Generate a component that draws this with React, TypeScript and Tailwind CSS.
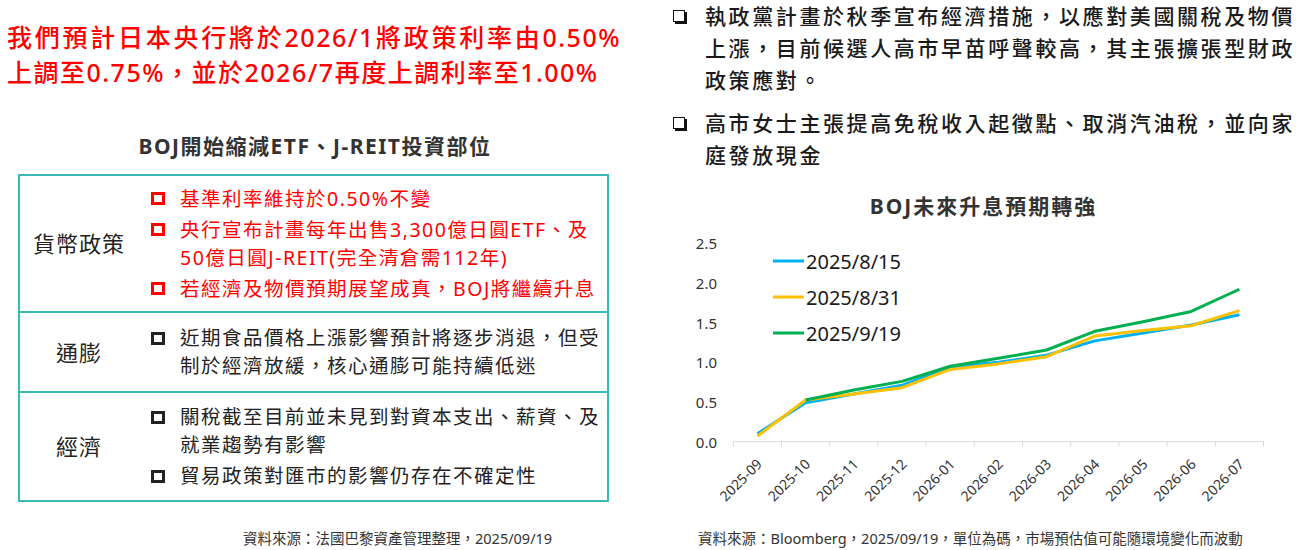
import React from "react";

const font = { fontFamily: '"Noto Sans", "Noto Sans CJK TC", sans-serif' };

const months = ["2025-09", "2025-10", "2025-11", "2025-12", "2026-01", "2026-02", "2026-03", "2026-04", "2026-05", "2026-06", "2026-07"];

const series: { label: string; color: string; values: (number | null)[] }[] = [
  { label: "2025/8/15", color: "#00b0f0", values: [0.1, 0.49, 0.6, 0.71, 0.94, 1.0, 1.09, 1.27, 1.37, 1.47, 1.6] },
  { label: "2025/8/31", color: "#ffc000", values: [0.07, 0.525, 0.6, 0.68, 0.91, 0.98, 1.07, 1.33, 1.4, 1.46, 1.65] },
  { label: "2025/9/19", color: "#00b050", values: [null, 0.525, 0.65, 0.76, 0.95, 1.05, 1.155, 1.39, 1.51, 1.64, 1.92] },
];

function Bullet({ red }: { red?: boolean }) {
  return (
    <div className="w-[29px] shrink-0">
      <div className={`mt-[7.5px] w-[14px] h-[13px] border-[3px] ${red ? "border-[#ff0000]" : "border-[#222]"}`} />
    </div>
  );
}

function Item({ red, children }: { red?: boolean; children: React.ReactNode }) {
  return (
    <div className={`flex items-start text-[19.5px] tracking-[1.5px] leading-[28px] ${red ? "text-[#ff0000]" : "text-[#222]"}`}>
      <Bullet red={red} />
      <div className="whitespace-nowrap">{children}</div>
    </div>
  );
}

function Row({ label, className, children }: { label: string; className: string; children: React.ReactNode }) {
  return (
    <div className={`grid grid-cols-[118px_1fr] items-center ${className}`}>
      <div className="text-center text-[22px] tracking-[1px] text-[#222]">{label}</div>
      <div className="pl-[13px] flex flex-col gap-[3px]">{children}</div>
    </div>
  );
}

function Chart() {
  const y0 = 216.7;
  const unit = 79.4;
  const yOf = (v: number) => y0 - unit * v;
  const xOf = (i: number) => 77.4 + 48.2 * i;
  return (
    <svg width="600" height="290" className="ml-[32px] mt-[4px] block">
      {[0, 0.5, 1, 1.5, 2, 2.5].map((v) => (
        <text key={v} x="37" y={yOf(v)} textAnchor="end" dominantBaseline="central" fontSize="15" fill="#333">
          {v.toFixed(1)}
        </text>
      ))}
      <line x1="53.3" y1={y0} x2="584" y2={y0} stroke="#d9d9d9" strokeWidth="1" />
      {Array.from({ length: 12 }).map((_, k) => (
        <line key={k} x1={53.3 + 48.2 * k} y1={y0} x2={53.3 + 48.2 * k} y2={y0 + 5} stroke="#d9d9d9" strokeWidth="1" />
      ))}
      {months.map((m, i) => (
        <text key={m} x={xOf(i) + 5.6} y={y0 + 23.3} textAnchor="end" fontSize="14" fill="#333" transform={`rotate(-45 ${xOf(i) + 5.6} ${y0 + 23.3})`}>
          {m}
        </text>
      ))}
      {series.map((s) => (
        <polyline
          key={s.label}
          fill="none"
          stroke={s.color}
          strokeWidth="3"
          strokeLinejoin="round"
          points={s.values
            .map((v, i) => (v === null ? null : `${xOf(i)},${yOf(v)}`))
            .filter(Boolean)
            .join(" ")}
        />
      ))}
      {series.map((s, i) => (
        <g key={s.label}>
          <line x1="93" y1={36 + 36 * i} x2="124" y2={36 + 36 * i} stroke={s.color} strokeWidth="3" />
          <text x="126" y={36 + 36 * i} dominantBaseline="central" fontSize="20" fill="#1a1a1a">
            {s.label}
          </text>
        </g>
      ))}
    </svg>
  );
}

function Check() {
  return (
    <div className="w-[32px] shrink-0">
      <div className="mt-[10px] w-[12px] h-[12px] border-[1.5px] border-[#111] shadow-[2px_2px_0_#111]" />
    </div>
  );
}

export default function App() {
  return (
    <div className="w-[1296px] h-[550px] bg-white flex overflow-hidden" style={font}>
      <div className="w-[648px] shrink-0 flex flex-col">
        <div className="pl-[7px] pt-[20px] text-[25px] tracking-[1.5px] leading-[34.5px] text-[#ff0000] font-medium">
          <div className="w-[614px] whitespace-nowrap [text-align-last:justify] text-justify">我們預計日本央行將於2026/1將政策利率由0.50%</div>
          <div className="whitespace-nowrap">上調至0.75%，並於2026/7再度上調利率至1.00%</div>
        </div>
        <div className="mt-[42px] w-[630px] text-center text-[21px] tracking-[1.5px] leading-[30px] font-bold text-[#333]">
          BOJ開始縮減ETF、J-REIT投資部位
        </div>
        <div className="mt-[13px] ml-[18px] w-[591px] border-2 border-[#3bb8b8]">
          <Row label="貨幣政策" className="h-[135px]">
            <Item red>基準利率維持於0.50%不變</Item>
            <Item red>
              央行宣布計畫每年出售3,300億日圓ETF、及
              <br />
              50億日圓J-REIT(完全清倉需112年)
            </Item>
            <Item red>若經濟及物價預期展望成真，BOJ將繼續升息</Item>
          </Row>
          <Row label="通膨" className="h-[80px] border-t-2 border-[#3bb8b8]">
            <Item>
              近期食品價格上漲影響預計將逐步消退，但受
              <br />
              制於經濟放緩，核心通膨可能持續低迷
            </Item>
          </Row>
          <Row label="經濟" className="h-[109px] border-t-2 border-[#3bb8b8]">
            <Item>
              關稅截至目前並未見到對資本支出、薪資、及
              <br />
              就業趨勢有影響
            </Item>
            <Item>貿易政策對匯市的影響仍存在不確定性</Item>
          </Row>
        </div>
        <div className="mt-[26px] ml-[243px] text-[14.5px] leading-[20px] text-[#333] whitespace-nowrap">
          資料來源：法國巴黎資產管理整理，2025/09/19
        </div>
      </div>

      <div className="flex-1 flex flex-col">
        <div className="pl-[25px] text-[21px] tracking-[2.6px] leading-[32px] text-[#1a1a1a] font-medium">
          <div className="flex items-start">
            <Check />
            <div className="w-[592px] shrink-0">執政黨計畫於秋季宣布經濟措施，以應對美國關稅及物價上漲，目前候選人高市早苗呼聲較高，其主張擴張型財政政策應對。</div>
          </div>
          <div className="flex items-start mt-[11px]">
            <Check />
            <div className="w-[592px] shrink-0">高市女士主張提高免稅收入起徵點、取消汽油稅，並向家庭發放現金</div>
          </div>
        </div>
        <div className="mt-[20px] text-center pl-[22px] text-[21px] tracking-[2px] leading-[30px] font-bold text-[#333]">
          BOJ未來升息預期轉強
        </div>
        <Chart />
        <div className="mt-[13px] ml-[50px] text-[14.5px] leading-[20px] text-[#333] whitespace-nowrap">
          資料來源：Bloomberg，2025/09/19，單位為碼，市場預估值可能隨環境變化而波動
        </div>
      </div>
    </div>
  );
}
